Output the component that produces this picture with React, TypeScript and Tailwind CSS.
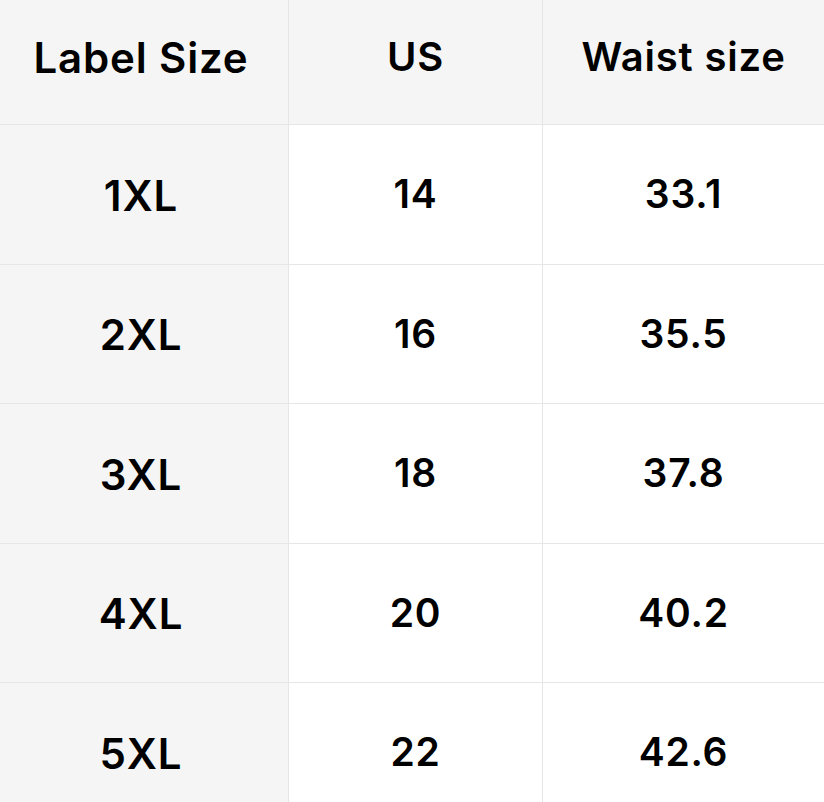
import React from 'react';

const rows = [
  ['1XL', '14', '33.1'],
  ['2XL', '16', '35.5'],
  ['3XL', '18', '37.8'],
  ['4XL', '20', '40.2'],
  ['5XL', '22', '42.6'],
];

const cell = 'flex items-center justify-center border-r border-b border-[#e6e6e6] font-semibold text-black tracking-[0.02em]';

export default function App() {
  return (
    <div className="w-[824px] h-[802px] overflow-hidden bg-white" style={{ fontFamily: 'Inter, "Noto Sans", sans-serif' }}>
      <div className="grid grid-cols-[289px_254px_281px] grid-rows-[125px_repeat(5,139.5px)]">
        <div className={`${cell} bg-[#f5f5f5] pb-[10px] pr-[6px] text-[42px]`}>Label Size</div>
        <div className={`${cell} bg-[#f5f5f5] pb-[10px] text-[40px]`}>US</div>
        <div className={`${cell} bg-[#f5f5f5] pb-[10px] text-[40px] border-r-0`}>Waist size</div>
        {rows.map((r) => (
          <React.Fragment key={r[0]}>
            <div className={`${cell} bg-[#f5f5f5] text-[42px] pt-[2px] pr-[6px]`}>{r[0]}</div>
            <div className={`${cell} bg-white text-[39px]`}>{r[1]}</div>
            <div className={`${cell} bg-white text-[39px] border-r-0`}>{r[2]}</div>
          </React.Fragment>
        ))}
      </div>
    </div>
  );
}
